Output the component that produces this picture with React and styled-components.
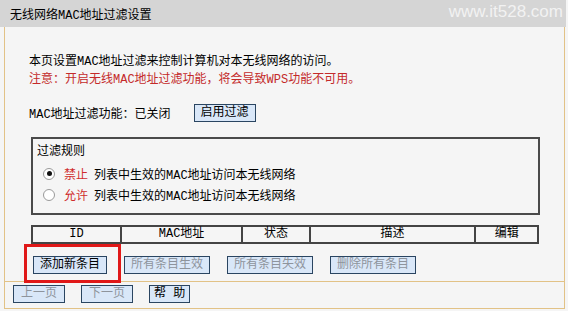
import styled, { createGlobalStyle } from 'styled-components';

const GlobalStyle = createGlobalStyle`
  html, body {
    margin: 0;
    padding: 0;
    background: #f5f5f5;
  }
  body {
    font-family: "Liberation Mono", "Noto Sans CJK SC", monospace;
    font-size: 12px;
    color: #000;
  }
`;

const COLUMNS = [
  { label: 'ID', width: 89 },
  { label: 'MAC地址', width: 122 },
  { label: '状态', width: 67 },
  { label: '描述', width: 168 },
  { label: '编辑', width: 62 },
];

const RULES = [
  { key: 'deny', label: '禁止', checked: true },
  { key: 'allow', label: '允许', checked: false },
];

export default function App() {
  return (
    <>
      <GlobalStyle />
      <Page>
        <TitleBar>
          <Title>无线网络MAC地址过滤设置</Title>
          <Watermark>www.it528.com</Watermark>
        </TitleBar>

        <Panel>
          <Content>
            <Line>本页设置MAC地址过滤来控制计算机对本无线网络的访问。</Line>
            <Line $warn>注意：开启无线MAC地址过滤功能，将会导致WPS功能不可用。</Line>

            <StatusRow>
              <span>MAC地址过滤功能：已关闭</span>
              <Button>启用过滤</Button>
            </StatusRow>

            <RuleBox>
              <RuleTitle>过滤规则</RuleTitle>
              {RULES.map((r) => (
                <RuleRow key={r.key}>
                  <Radio $checked={r.checked} />
                  <RuleName>{r.label}</RuleName>
                  <span>列表中生效的MAC地址访问本无线网络</span>
                </RuleRow>
              ))}
            </RuleBox>

            <Table>
              <thead>
                <tr>
                  {COLUMNS.map((c) => (
                    <Th key={c.label} style={{ width: c.width }}>{c.label}</Th>
                  ))}
                </tr>
              </thead>
            </Table>

            <ActionRow>
              <Highlight>
                <Button>添加新条目</Button>
              </Highlight>
              <Button $disabled>所有条目生效</Button>
              <Button $disabled>所有条目失效</Button>
              <Button $disabled>删除所有条目</Button>
            </ActionRow>
          </Content>

          <Footer>
            <Button $disabled $pad={7}>上一页</Button>
            <Button $disabled $pad={7}>下一页</Button>
            <Button $pad={4}>帮 助</Button>
          </Footer>
        </Panel>
      </Page>
    </>
  );
}

const Page = styled.div`
  width: 568px;
  height: 311px;
  overflow: hidden;
`

const TitleBar = styled.div`
  height: 27px;
  width: 566px;
  background: #d5d5d5;
  display: flex;
  align-items: center;
  justify-content: space-between;
  padding: 0 3px 0 10px;
  box-sizing: border-box;
`

const Title = styled.div`
  font-size: 12px;
  padding-top: 1px;
`

const Watermark = styled.div`
  font-family: "Liberation Sans", Arial, sans-serif;
  font-size: 17px;
  color: #f2f2f2;
  margin-top: -4px;
`

const Panel = styled.div`
  margin-left: 4px;
  width: 561px;
  height: 282px;
  box-sizing: border-box;
  border: 1px solid #e2c286;
  border-top: none;
  display: flex;
  flex-direction: column;
`

const Content = styled.div`
  padding: 26px 24px 0 24px;
  height: 255px;
  box-sizing: border-box;
  border-bottom: 1px solid #e2c286;
`

const Line = styled.div`
  line-height: 18px;
  color: ${(p) => (p.$warn ? '#c42a2a' : '#000')};
`

const StatusRow = styled.div`
  display: flex;
  align-items: center;
  gap: 23px;
  margin-top: 15px;
  height: 18px;
`

const Button = styled.button`
  font-family: "Liberation Mono", "Noto Sans CJK SC", monospace;
  font-size: 12px;
  height: 18px;
  padding: 0 ${(p) => p.$pad ?? 6}px;
  line-height: 16px;
  background: #d9e7f8;
  border: 1px solid #2a4561;
  border-radius: 0;
  color: ${(p) => (p.$disabled ? '#8e949c' : '#000')};
  cursor: default;
  white-space: pre;
`

const RuleBox = styled.div`
  margin: 15px 0 0 2px;
  border: 2px solid #4a4a4a;
  height: 78px;
  box-sizing: border-box;
  padding: 3px 0 0 4px;
`

const RuleTitle = styled.div`
  height: 21px;
  line-height: 21px;
`

const RuleRow = styled.div`
  display: flex;
  align-items: center;
  height: 21px;
  padding-left: 6px;
`

const Radio = styled.span`
  width: 12px;
  height: 12px;
  border-radius: 50%;
  border: 1px solid #9a9a9a;
  background: #fff;
  box-sizing: border-box;
  position: relative;
  margin-right: 9px;
  &::after {
    content: '';
    display: ${(p) => (p.$checked ? 'block' : 'none')};
    position: absolute;
    left: 2.5px;
    top: 2.5px;
    width: 5px;
    height: 5px;
    border-radius: 50%;
    background: #111;
  }
`

const RuleName = styled.span`
  color: #d02c2c;
  margin-right: 6px;
`

const Table = styled.table`
  margin: 10px 0 0 2px;
  width: 508px;
  border-collapse: collapse;
  border: 2px solid #444;
`

const Th = styled.th`
  font-weight: normal;
  height: 15px;
  padding: 0;
  border: 2px solid #444;
  text-align: center;
  line-height: 15px;
`

const ActionRow = styled.div`
  display: flex;
  align-items: center;
  gap: 17px;
  margin: 12px 0 0 4px;
`

const Highlight = styled.div`
  position: relative;
  display: flex;
  &::before {
    content: '';
    position: absolute;
    left: -9px;
    top: -12px;
    right: -14px;
    bottom: -9px;
    border: 3px solid #e01818;
    pointer-events: none;
  }
`

const Footer = styled.div`
  display: flex;
  align-items: center;
  gap: 16px;
  padding: 3px 0 0 8px;
`
